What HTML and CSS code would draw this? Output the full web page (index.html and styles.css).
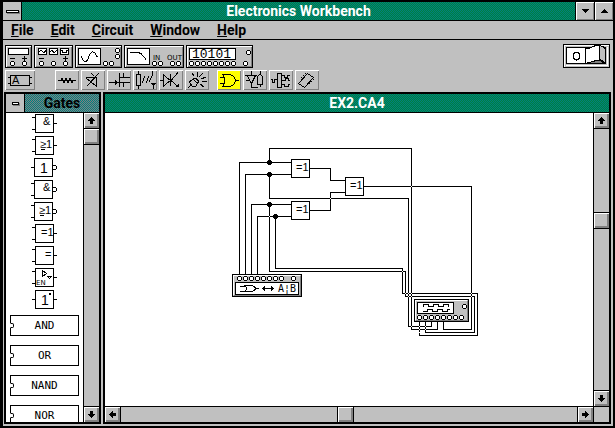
FILE: index.html
```html
<!DOCTYPE html>
<html lang="en">
<head>
<meta charset="utf-8">
<title>Electronics Workbench</title>
<link rel="stylesheet" href="styles.css">
</head>
<body>
<div class="app">
  <header class="titlebar">
    <button class="sysmenu" aria-label="Control menu"><span class="dash"></span></button>
    <h1 class="caption">Electronics Workbench</h1>
    <button class="sizer" aria-label="Minimize"><svg width="7" height="4" viewBox="0 0 7 4"><path d="M0 0h7v1h-1v1h-1v1h-1v1h-1v-1h-1v-1h-1v-1h-1z"/></svg></button>
    <button class="sizer" aria-label="Maximize"><svg width="7" height="4" viewBox="0 0 7 4"><path d="M0 4h7v-1h-1v-1h-1v-1h-1v-1h-1v1h-1v1h-1v1h-1z"/></svg></button>
  </header>
  <nav class="menu">
    <a href="#"><u>F</u>ile</a><a href="#"><u>E</u>dit</a><a href="#"><u>C</u>ircuit</a><a href="#"><u>W</u>indow</a><a href="#"><u>H</u>elp</a>
  </nav>

  <div class="toolbar">
    <div class="tools">
      <button class="instrument" aria-label="Multimeter"><svg width="25" height="21" viewBox="6 46 25 21">
        <path class="screen" d="M8.5 48.5h20v6h-20z"/><path d="M10 58.5h5M22 58.5h5M24.5 56v5"/>
        <g class="jacks"><circle cx="12.5" cy="63.5" r="2"/><circle cx="24.5" cy="63.5" r="2"/></g></svg></button>
      <button class="instrument" aria-label="Function generator"><svg width="37" height="21" viewBox="35 46 37 21">
        <path class="screen" d="M38.5 48.5h8v6h-8zM49.5 48.5h8v6h-8zM60.5 48.5h8v6h-8z"/>
        <path d="M39 52l2-2 3 3 2-3M50 52l2-2 2 3 3-3M61 50.5h1.5v2h4v-2h1.5M39 58.5h5M63 58.5h5M65.5 56v5"/>
        <g class="jacks"><circle cx="41.5" cy="63.5" r="2"/><circle cx="53.5" cy="63.5" r="2"/><circle cx="65.5" cy="63.5" r="2"/></g></svg></button>
      <button class="instrument" aria-label="Oscilloscope"><svg width="45" height="21" viewBox="76 46 45 21">
        <path class="screen" d="M78.5 48.5h22v16h-22z"/><path d="M81.5 56.5c2 6 5 7 7 1s5-9 9 0"/>
        <g class="jacks"><circle cx="117.5" cy="50.5" r="2"/><circle cx="117.5" cy="56.5" r="2"/><circle cx="105.5" cy="63.5" r="2"/><circle cx="111.5" cy="63.5" r="2"/></g></svg></button>
      <button class="instrument" aria-label="Bode plotter"><svg width="58" height="21" viewBox="125 46 58 21">
        <path class="screen" d="M127.5 48.5h22v16h-22z"/><path d="M130 52.5h8l3 1 5 6"/>
        <text class="tiny" x="153" y="60">IN</text><text class="tiny" x="167" y="60">OUT</text>
        <g class="jacks"><circle cx="154.5" cy="63.5" r="2"/><circle cx="160.5" cy="63.5" r="2"/><circle cx="172.5" cy="63.5" r="2"/><circle cx="178.5" cy="63.5" r="2"/></g></svg></button>
      <button class="instrument" aria-label="Word generator"><svg width="65" height="21" viewBox="187 46 65 21">
        <path class="screen" d="M189.5 48.5h46v11h-46z"/><text class="digits" x="192" y="58">10101</text>
        <g class="jacks"><circle cx="191.5" cy="63.5" r="2"/><circle cx="197.5" cy="63.5" r="2"/><circle cx="203.5" cy="63.5" r="2"/><circle cx="209.5" cy="63.5" r="2"/><circle cx="215.5" cy="63.5" r="2"/><circle cx="221.5" cy="63.5" r="2"/><circle cx="227.5" cy="63.5" r="2"/><circle cx="233.5" cy="63.5" r="2"/><circle cx="245.5" cy="63.5" r="2"/><circle cx="248.5" cy="52.5" r="2"/></g></svg></button>
      <button class="power" aria-label="Power switch"><svg width="45" height="22" viewBox="564 45 45 22">
        <path d="M564.5 67V45.5h44" class="lit"/>
        <path class="screen" d="M566.5 47.5h39v16h-39z"/><path class="lit" d="M566 65.5h41.5V47"/>
        <ellipse cx="576.5" cy="56" rx="3" ry="4"/>
        <path class="white" d="M585.5 63.5V49l4-1 5-2 4-.5h1V60l-5 1z"/>
        <path class="case" d="M599.5 45.5l4 1.5 2 3v13l-6-4z"/>
        <path class="shade" d="M588 63.5l4-2 7.5-1.5 5 3.5z"/></svg></button>
    </div>
    <div class="tools parts">
      <button class="part custom" aria-label="Custom"><svg width="30" height="20" viewBox="5 70 30 20"><path d="M10.5 75.5h19v10h-19zM8 77.5h2M8 83.5h2M30 77.5h2M30 83.5h2"/><text class="label" x="12" y="84">A</text></svg></button>
      <button class="part" aria-label="Passive"><svg width="24" height="20" viewBox="55 70 24 20"><path d="M58 80.5h3l1-2 2 4 2-4 2 4 2-4 2 4 1-2h3"/></svg></button>
      <button class="part" aria-label="Active"><svg width="24" height="20" viewBox="81 70 24 20"><path d="M85.5 77.5h11v9M86 78l10 8M87 86l12-13M91 73l3 3"/></svg></button>
      <button class="part" aria-label="Field effect"><svg width="24" height="20" viewBox="107 70 24 20"><path d="M109 82.5h10M119.5 73v14M120 77.5h10M120 82.5h10M123.5 77v-4M123.5 83v4"/><path class="ink" d="M115 80l4 2.5-4 2.5z"/></svg></button>
      <button class="part" aria-label="Control"><svg width="24" height="20" viewBox="133 70 24 20"><path d="M138.5 71v3M136.5 74.5h4v11h-4zM138.5 86v3M142 83l3-7M146 83l3-7M149 82l4-8M152.5 75v-4M153.5 85v4"/><path class="ink" d="M151 83h5l-2.5 3z"/></svg></button>
      <button class="part" aria-label="Hybrid"><svg width="24" height="20" viewBox="159 70 24 20"><path d="M160 80.5h3M163.5 75v11l7-5.5zM170.5 74v12M171 80.5l7-8M171 80.5l7 6"/><path class="ink" d="M175 87h4v-4z"/></svg></button>
      <button class="part" aria-label="Indicators"><svg width="24" height="20" viewBox="185 70 24 20"><path d="M189 82l6-4 4 3-3 5-3 1zM191 85l-3 3M194 80l4 4M197 77l1-5M199 77l4-4M201 79l5-2M202 81l5 1M200 84l4 3M194 76l-2-3"/></svg></button>
      <button class="part selected" aria-label="Gates"><svg width="24" height="20" viewBox="217 70 24 20"><path d="M220 77.5h4M220 83.5h4M222.5 74.5h8l3 2 2.5 4-2.5 4-3 2h-8l2-3v-6zM236 80.5h3"/></svg></button>
      <button class="part" aria-label="Digital"><svg width="24" height="20" viewBox="243 70 24 20"><path d="M245 75.5h12M247 75.5l4.5 8 4-8M251.5 71v4M251.5 84v3h6M257.5 84v-7l2-3h1l2 3v7zM260.5 71v3M260.5 84v3M246 80.5h3"/></svg></button>
      <button class="part" aria-label="Flip flops"><svg width="24" height="20" viewBox="269 70 24 20"><path d="M271 79.5h1v3h2v-3h3M277.5 73.5h4v14h-4zM282 75.5h2v2h3v-2h3M282 80.5h3v-2h3v2h2M282 84.5h2v2h4v-2h2"/></svg></button>
      <button class="part" aria-label="Integrated circuits"><svg width="24" height="20" viewBox="295 70 24 20"><path d="M298.5 83.5l9-10 6 4-9 10z"/><path class="pins" d="M297.5 82.5l9-10M305.5 88.5l9-10"/></svg></button>
    </div>
  </div>

  <main class="desk">
    <section class="window palette">
      <header class="titlebar inactive">
        <button class="sysmenu" aria-label="Gates menu"><span class="dash short"></span></button>
        <h2 class="caption">Gates</h2>
      </header>
      <div class="body">
        <div class="list">
          <svg class="symbols" width="77" height="198" viewBox="6 113 77 198">
            <path class="screen" d="M35.5 114.5h18v18h-18zM35.5 136.5h18v18h-18zM34.5 158.5h18v18h-18zM34.5 180.5h18v18h-18zM34.5 202.5h18v18h-18zM35.5 224.5h18v18h-18zM35.5 246.5h18v18h-18zM35.5 268.5h18v18h-18zM35.5 290.5h18v18h-18z"/>
            <path d="M32 117.5h3M32 129.5h3M54 123.5h3M32 139.5h3M32 151.5h3M54 145.5h3M31 167.5h3M31 183.5h3M31 195.5h3M31 205.5h3M31 217.5h3M32 227.5h3M32 239.5h3M54 233.5h3M32 249.5h3M32 261.5h3M54 255.5h3M32 271.5h3M32 283.5h3M54 277.5h3M32 299.5h3M54 299.5h3"/>
            <circle cx="54.5" cy="167.5" r="2"/><circle cx="54.5" cy="189.5" r="2"/><circle cx="54.5" cy="211.5" r="2"/>
            <path d="M42.5 270.5v6l4-3zM47.5 276.5h4l-2 2z"/>
            <text class="label" x="43" y="125">&amp;</text><text class="label" x="40" y="148">≥1</text>
            <text class="label big" x="40" y="173">1</text><text class="label" x="43" y="191">&amp;</text>
            <text class="label" x="39" y="214">≥1</text><text class="label" x="41" y="236">=1</text>
            <text class="label" x="45" y="258">=</text><text class="tiny" x="36" y="285">EN</text><text class="label big" x="41" y="305">1</text><path class="ink" d="M49 293h2v2h-2z"/>
            <path d="M41 149.5h4M40 215.5h4"/>
          </svg>
          <button class="chip">AND</button>
          <button class="chip">OR</button>
          <button class="chip">NAND</button>
          <button class="chip">NOR</button>
        </div>
        <div class="scroll vertical">
          <button class="arrow" aria-label="Scroll up"><svg width="7" height="7" viewBox="0 0 7 7"><path d="M3 0h1v1h1v1h1v1h1v1h-2v3h-3v-3h-2v-1h1v-1h1v-1h1z"/></svg></button>
          <span class="thumb"></span>
          <span class="track"></span>
          <button class="arrow" aria-label="Scroll down"><svg width="7" height="7" viewBox="0 0 7 7"><path d="M2 0h3v3h2v1h-1v1h-1v1h-1v1h-1v-1h-1v-1h-1v-1h-1v-1h2z"/></svg></button>
        </div>
      </div>
    </section>

    <section class="window document">
      <header class="titlebar"><h2 class="caption">EX2.CA4</h2></header>
      <div class="body">
        <div class="sheet">
          <svg class="circuit" width="488" height="293" viewBox="105 113 488 293" role="img" aria-label="Circuit diagram">
            <path d="M239.5 278V162.5H291M245.5 278V174.5H291M251.5 278V204.5H291M257.5 278V216.5H291"/>
            <path d="M269.5 162V148.5H411.5V329.5H437.5V322M269.5 174V198.5H408.5V326.5H431.5V322"/>
            <path d="M269.5 204V271.5H405.5V296.5H474.5V332.5H425.5V322M275.5 216V268.5H402.5V293.5H477.5V335.5H419.5V322"/>
            <path d="M310 168.5H330.5V180.5H345M310 210.5H330.5V192.5H345M364 186.5H471.5V329.5H443.5V322"/>
            <path class="cross" d="M269 216h1v1h-1zM330 198h1v1h-1zM402 271h1v1h-1zM405 293h1v1h-1zM408 293h1v1h-1zM411 293h1v1h-1zM408 296h1v1h-1zM411 296h1v1h-1zM471 293h1v1h-1zM471 296h1v1h-1zM411 186h1v1h-1zM411 326h1v1h-1zM419 326h1v1h-1zM425 326h1v1h-1zM419 329h1v1h-1zM425 329h1v1h-1zM419 332h1v1h-1z"/>
            <path class="ink" d="M268 160h3v1h1v3h-1v1h-3v-1h-1v-3h1zM268 172h3v1h1v3h-1v1h-3v-1h-1v-3h1zM268 202h3v1h1v3h-1v1h-3v-1h-1v-3h1zM274 214h3v1h1v3h-1v1h-3v-1h-1v-3h1z"/>
            <path class="screen" d="M291.5 159.5h18v18h-18zM291.5 201.5h18v18h-18zM345.5 177.5h18v18h-18z"/>
            <text class="label" x="296" y="171">=1</text><text class="label" x="296" y="213">=1</text><text class="label" x="350" y="189">=1</text>
            <path class="case" d="M232.5 274.5h69v22h-69z"/><path class="lit" d="M233.5 295V275.5H300"/><path class="dim" d="M234 295.5h66.5V276"/>
            <path class="screen" d="M235.5 282.5h63v12h-63z"/>
            <path d="M240 286.5h6M240 291.5h6M244.5 285.5h7l3 1 1 2-1 2-3 1h-7l2-2v-2zM255 288.5h4M264 288.5h8"/><path class="ink" d="M262 288.5l3-3v6zM274 288.5l-3-3v6z"/>
            <text class="mono" x="278" y="292">A¦B</text>
            <path class="case" d="M414.5 299.5h54v22h-54z"/><path class="lit" d="M415.5 320V300.5H467"/><path class="dim" d="M416 320.5h51.5V301"/>
            <path class="screen" d="M417.5 302.5h36v11h-36z"/>
            <path d="M423 306.5v-2h5v2h5v-2h5v2h5v-2h5v2M423 311.5h4v-2h5v2h5v-2h5v2h5v-2h3"/>
            <g class="jacks"><circle cx="239.5" cy="278.5" r="2"/><circle cx="245.5" cy="278.5" r="2"/><circle cx="251.5" cy="278.5" r="2"/><circle cx="257.5" cy="278.5" r="2"/><circle cx="263.5" cy="278.5" r="2"/><circle cx="269.5" cy="278.5" r="2"/><circle cx="275.5" cy="278.5" r="2"/><circle cx="281.5" cy="278.5" r="2"/><circle cx="293.5" cy="278.5" r="2"/>
            <circle cx="419.5" cy="317.5" r="2"/><circle cx="425.5" cy="317.5" r="2"/><circle cx="431.5" cy="317.5" r="2"/><circle cx="437.5" cy="317.5" r="2"/><circle cx="443.5" cy="317.5" r="2"/><circle cx="449.5" cy="317.5" r="2"/><circle cx="455.5" cy="317.5" r="2"/><circle cx="461.5" cy="317.5" r="2"/><circle cx="464.5" cy="306.5" r="2"/></g>
          </svg>
        </div>
        <div class="scroll vertical">
          <button class="arrow" aria-label="Scroll up"><svg width="7" height="7" viewBox="0 0 7 7"><path d="M3 0h1v1h1v1h1v1h1v1h-2v3h-3v-3h-2v-1h1v-1h1v-1h1z"/></svg></button>
          <span class="track before-y"></span>
          <span class="thumb"></span>
          <span class="track after-y"></span>
          <button class="arrow" aria-label="Scroll down"><svg width="7" height="7" viewBox="0 0 7 7"><path d="M2 0h3v3h2v1h-1v1h-1v1h-1v1h-1v-1h-1v-1h-1v-1h-1v-1h2z"/></svg></button>
        </div>
        <div class="scroll horizontal">
          <button class="arrow" aria-label="Scroll left"><svg width="7" height="7" viewBox="0 0 7 7"><path d="M0 3h1v-1h1v-1h1v-1h1v2h3v3h-3v2h-1v-1h-1v-1h-1v-1h-1z"/></svg></button>
          <span class="track before-x"></span>
          <span class="thumb"></span>
          <span class="track after-x"></span>
          <button class="arrow" aria-label="Scroll right"><svg width="7" height="7" viewBox="0 0 7 7"><path d="M7 3h-1v-1h-1v-1h-1v-1h-1v2h-3v3h3v2h1v-1h1v-1h1v-1h1z"/></svg></button>
        </div>
        <div class="corner"></div>
      </div>
    </section>
  </main>
</div>
</body>
</html>
```

FILE: styles.css
```css
* { box-sizing: border-box; }

body {
  margin: 0;
  font: bold 14px/18px Roboto, "Liberation Sans", sans-serif;
  color: #000;
}

button {
  margin: 0;
  padding: 0;
  border: 0;
  border-radius: 0;
  font: inherit;
  color: inherit;
  background: #c0c0c0;
}

svg { display: block; }

.app {
  display: flex;
  flex-direction: column;
  height: 100vh;
  border: solid #000;
  border-width: 2px 2px 2px 3px;
  background: #c0c0c0;
}

/* Title bars */
.titlebar {
  display: flex;
  flex: none;
  height: 19px;
  border-bottom: 1px solid #000;
  color: #fff;
  background: repeating-conic-gradient(#008080 0 25%, #008040 0 50%) 0 0 / 2px 2px;
}

.titlebar.inactive {
  color: #000;
  background: repeating-conic-gradient(#808080 0 25%, #008080 0 50%) 0 0 / 2px 2px;
}

.caption {
  flex: 1;
  margin: 0;
  font-size: 14px;
  line-height: 18px;
  text-align: center;
}

.sysmenu {
  display: grid;
  place-items: center;
  width: 19px;
  border-right: 1px solid #000;
}

.dash {
  width: 13px;
  height: 3px;
  border: 1px solid #000;
  background: #fff;
  box-shadow: 1px 1px #808080;
}

.dash.short { width: 7px; }

.sizer {
  display: grid;
  place-items: center;
  width: 19px;
  border-left: 1px solid #000;
  box-shadow: inset 1px 1px #fff, inset -1px -1px #808080;
}

/* Menu */
.menu {
  display: flex;
  flex: none;
  gap: 17px;
  height: 19px;
  padding-left: 8px;
  border-bottom: 1px solid #000;
}

.menu a {
  color: #000;
  text-decoration: none;
}

/* Toolbar */
.toolbar {
  display: flex;
  flex: none;
  flex-direction: column;
  gap: 2px;
  padding: 4px 3px 2px 2px;
}

.tools {
  display: flex;
  align-items: flex-end;
  gap: 2px;
}

.tools svg,
.symbols,
.circuit {
  fill: none;
  stroke: #000;
  stroke-width: 1;
  shape-rendering: crispEdges;
}

.instrument {
  border: 1px solid #000;
  box-shadow: inset 1px 1px #fff, inset -1px -1px #808080;
}

.power {
  margin-left: auto;
  border: 1px solid #000;
}

.part { box-shadow: inset 1px 1px #fff, inset -1px -1px #808080; }
.part.custom { margin-right: 18px; }
.part.selected { margin-left: 6px; background: #ff0; }

/* Drawing styles */
svg .screen, svg .white { fill: #fff; }
svg .case { fill: #c0c0c0; }
svg .lit { stroke: #fff; }
svg .dim { stroke: #808080; }
svg .shade { fill: #808080; }
svg .ink { fill: #000; stroke: none; }
svg .cross { fill: #fff; stroke: none; }
svg .jacks { fill: #fff; }
svg .pins { stroke-dasharray: 1 2; }

svg text {
  fill: #000;
  stroke: none;
  font-weight: normal;
}

.tiny { font: 7px "DejaVu Sans", sans-serif; }
.digits { font: 13px "Liberation Mono", monospace; }
.label { font: 11px "Liberation Sans", sans-serif; }
.label.big { font-size: 14px; }
.mono { font: 10px "DejaVu Sans Mono", monospace; }

/* Windows */
.desk {
  display: flex;
  flex: 1;
  gap: 2px;
  min-height: 0;
  padding: 0 2px 2px 1px;
}

.window {
  display: flex;
  flex-direction: column;
  border: 2px solid #000;
  background: #fff;
}

.palette { width: 97px; }
.document { flex: 1; min-width: 0; }

.body {
  display: grid;
  flex: 1;
  grid-template-columns: minmax(0, 1fr) 16px;
  grid-template-rows: minmax(0, 1fr);
  min-height: 0;
}

.document .body { grid-template-rows: minmax(0, 1fr) 16px; }

.sheet { overflow: hidden; }

.list {
  display: flex;
  flex-direction: column;
  gap: 9px;
  overflow: hidden;
}

.list > * { flex: none; }
.symbols { margin-bottom: -5px; }

.chip {
  position: relative;
  height: 21px;
  margin: 0 4px;
  border: 1px solid #000;
  font: 11px/19px "DejaVu Sans Mono", monospace;
  background: #fff;
}

.chip::before {
  content: "";
  position: absolute;
  top: 7px;
  left: -1px;
  width: 4px;
  height: 5px;
  border: 1px solid #000;
  border-left-color: #fff;
  border-radius: 0 2px 2px 0;
  box-sizing: border-box;
}

/* Scroll bars */
.scroll {
  display: flex;
  background: #c0c0c0;
}

.scroll.vertical {
  flex-direction: column;
  border-left: 1px solid #000;
}

.scroll.horizontal { border-top: 1px solid #000; }

.arrow, .thumb {
  display: grid;
  flex: none;
  place-items: center;
  width: 15px;
  height: 15px;
  box-shadow: inset 1px 1px #fff, inset -2px -2px #808080;
}

.track { flex: 1; }

.vertical > * + * { border-top: 1px solid #000; }
.vertical > * + .thumb, .vertical > * + .arrow { height: 16px; }
.horizontal > * + * { border-left: 1px solid #000; }
.horizontal > * + .thumb, .horizontal > * + .arrow { width: 16px; }

.before-y { flex: 84; }
.after-y { flex: 162; }
.before-x { flex: 216; }
.after-x { flex: 224; }

.corner {
  border: solid #000;
  border-width: 1px 0 0 1px;
  background: #c0c0c0;
}
```
